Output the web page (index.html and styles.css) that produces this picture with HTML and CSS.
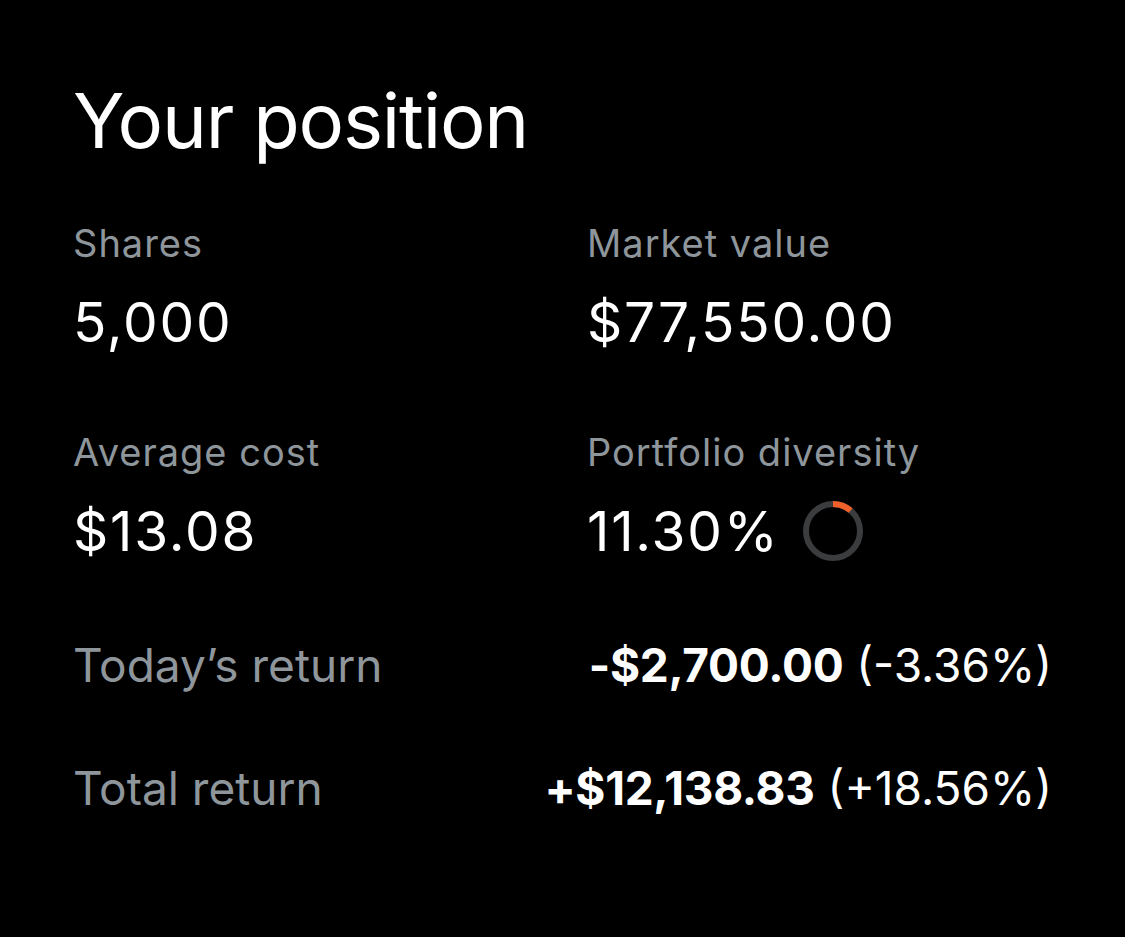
FILE: index.html
```html
<!DOCTYPE html>
<html lang="en">
<head>
<meta charset="utf-8">
<title>Your position</title>
<link rel="stylesheet" href="styles.css">
</head>
<body>
<main class="position">
  <h1 class="title">Your position</h1>
  <div class="stats">
    <div class="stat">
      <div class="label">Shares</div>
      <div class="value">5,000</div>
    </div>
    <div class="stat">
      <div class="label">Market value</div>
      <div class="value">$77,550.00</div>
    </div>
    <div class="stat">
      <div class="label">Average cost</div>
      <div class="value">$13.08</div>
    </div>
    <div class="stat">
      <div class="label">Portfolio diversity</div>
      <div class="value value-ring">11.30%
        <svg class="ring" width="62" height="62" viewBox="0 0 62 62" aria-hidden="true">
          <circle cx="31" cy="31" r="27" fill="none" stroke="#3a3c3e" stroke-width="6"/>
          <circle cx="31" cy="31" r="27" fill="none" stroke="#f0602a" stroke-width="6"
            stroke-dasharray="19.17 200" transform="rotate(-90 31 31)"/>
        </svg>
      </div>
    </div>
  </div>
  <div class="returns">
    <div class="return-row">
      <div class="return-label">Today’s return</div>
      <div class="return-value"><b>-$2,700.00</b> (-3.36%)</div>
    </div>
    <div class="return-row">
      <div class="return-label">Total return</div>
      <div class="return-value"><b>+$12,138.83</b> (+18.56%)</div>
    </div>
  </div>
</main>
</body>
</html>
```
FILE: styles.css
```css
html, body {
  margin: 0;
  background: #000;
}
body {
  font-family: Inter, "Noto Sans", "Liberation Sans", sans-serif;
  color: #fff;
}
.position {
  padding: 82px 75px 0 73px;
}
.title {
  margin: 0;
  font-size: 76px;
  line-height: 76px;
  font-weight: 400;
  letter-spacing: -1.2px;
}
.stats {
  margin-top: 63px;
  display: grid;
  grid-template-columns: 514px 1fr;
  row-gap: 76px;
}
.label {
  font-size: 38px;
  line-height: 44px;
  letter-spacing: 1px;
  color: #8e969c;
}
.value {
  margin-top: 25px;
  font-size: 55px;
  line-height: 64px;
  letter-spacing: 1.8px;
}
.value-ring {
  display: flex;
  align-items: center;
  gap: 22px;
}
.ring {
  display: block;
}
.returns {
  margin-top: 74px;
  display: flex;
  flex-direction: column;
  gap: 67px;
}
.return-row {
  display: flex;
  justify-content: space-between;
  align-items: baseline;
  font-size: 46px;
  line-height: 56px;
}
.return-label {
  color: #8e969c;
}
.return-value {
  margin-right: -2px;
}
.return-value b {
  font-weight: 700;
  letter-spacing: -0.3px;
}
```
